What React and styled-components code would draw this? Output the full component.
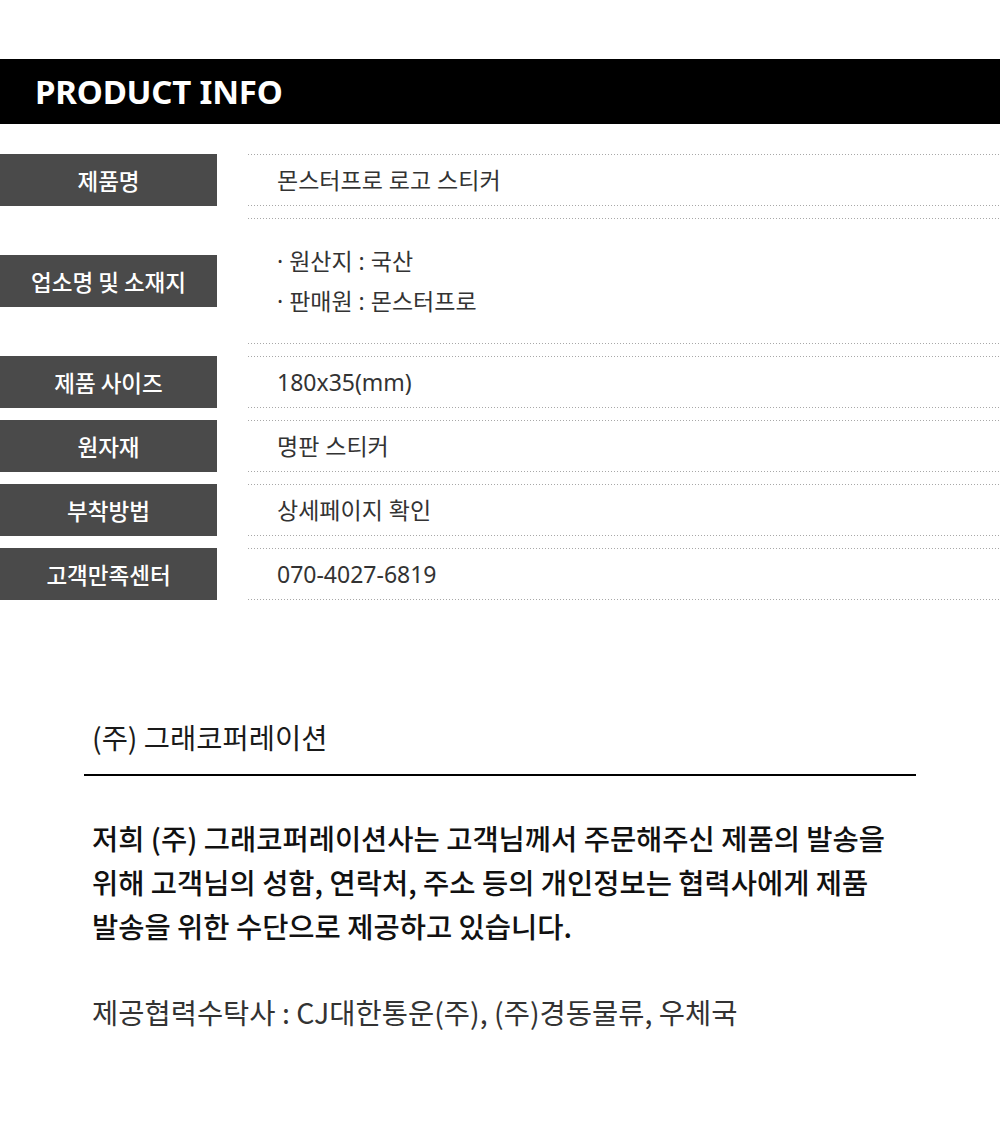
import React from 'react';
import styled, { createGlobalStyle } from 'styled-components';

const GlobalStyle = createGlobalStyle`
    html, body {
        margin: 0;
        padding: 0;
        background: #fff;
    }
    body {
        font-family: "Noto Sans CJK KR", "Noto Sans", sans-serif;
    }
`

const Page = styled.div`
    width: 1000px;
    padding-top: 59px;
    padding-bottom: 80px;
`

const Header = styled.div`
    display: flex;
    align-items: center;
    height: 65px;
    padding-left: 35px;
    background: #000;
    color: #fff;
    font-family: "Noto Sans", sans-serif;
    font-size: 33px;
    font-weight: 700;
    letter-spacing: -0.2px;
`

const Table = styled.div`
    display: flex;
    flex-direction: column;
    gap: 12px;
    margin-top: 30px;
`

const Row = styled.div`
    display: flex;
    align-items: center;
    min-height: ${props => props.tall ? '126px' : '52px'};
`

const Label = styled.div`
    display: flex;
    align-items: center;
    justify-content: center;
    flex: 0 0 217px;
    height: 52px;
    background: #4a4a4a;
    color: #fff;
    font-size: 22.5px;
    font-weight: 500;
`

const Value = styled.div`
    align-self: stretch;
    flex: 1;
    display: flex;
    flex-direction: column;
    justify-content: center;
    margin-left: 31px;
    padding-left: 29px;
    color: #333;
    font-family: "Noto Sans", "Noto Sans CJK KR", sans-serif;
    font-size: 23px;
    line-height: 40px;
    background-image:
        linear-gradient(to right, #a8a8a8 34%, transparent 0),
        linear-gradient(to right, #a8a8a8 34%, transparent 0);
    background-size: 3px 1px, 3px 1px;
    background-position: left top, left bottom;
    background-repeat: repeat-x, repeat-x;
`

const Company = styled.div`
    margin: 117px 84px 0;
`

const CompanyName = styled.div`
    padding: 0 0 17px 8px;
    border-bottom: 2px solid #000;
    color: #1a1a1a;
    font-size: 28.5px;
    line-height: 40px;
`

const Notice = styled.p`
    margin: 40px 0 0;
    padding-left: 8px;
    color: #111;
    font-size: 28.5px;
    font-weight: 500;
    line-height: 44px;
`

const Partners = styled.p`
    margin: 42px 0 0;
    padding-left: 8px;
    color: #333;
    font-size: 28.5px;
    line-height: 44px;
`

const rows = [
    { label: '제품명', value: ['몬스터프로 로고 스티커'] },
    { label: '업소명 및 소재지', value: ['· 원산지 : 국산', '· 판매원 : 몬스터프로'], tall: true },
    { label: '제품 사이즈', value: ['180x35(mm)'] },
    { label: '원자재', value: ['명판 스티커'] },
    { label: '부착방법', value: ['상세페이지 확인'] },
    { label: '고객만족센터', value: ['070-4027-6819'] },
];

const App = () => {
    return (
        <Page>
            <GlobalStyle />
            <Header>PRODUCT INFO</Header>
            <Table>
                { rows.map(row => (
                    <Row key={ row.label } tall={ row.tall }>
                        <Label>{ row.label }</Label>
                        <Value>
                            { row.value.map(line => <div key={ line }>{ line }</div>) }
                        </Value>
                    </Row>
                )) }
            </Table>
            <Company>
                <CompanyName>(주) 그래코퍼레이션</CompanyName>
                <Notice>
                    저희 (주) 그래코퍼레이션사는 고객님께서 주문해주신 제품의 발송을<br />
                    위해 고객님의 성함, 연락처, 주소 등의 개인정보는 협력사에게 제품<br />
                    발송을 위한 수단으로 제공하고 있습니다.
                </Notice>
                <Partners>제공협력수탁사 : CJ대한통운(주), (주)경동물류, 우체국</Partners>
            </Company>
        </Page>
    );
}

export default App;
